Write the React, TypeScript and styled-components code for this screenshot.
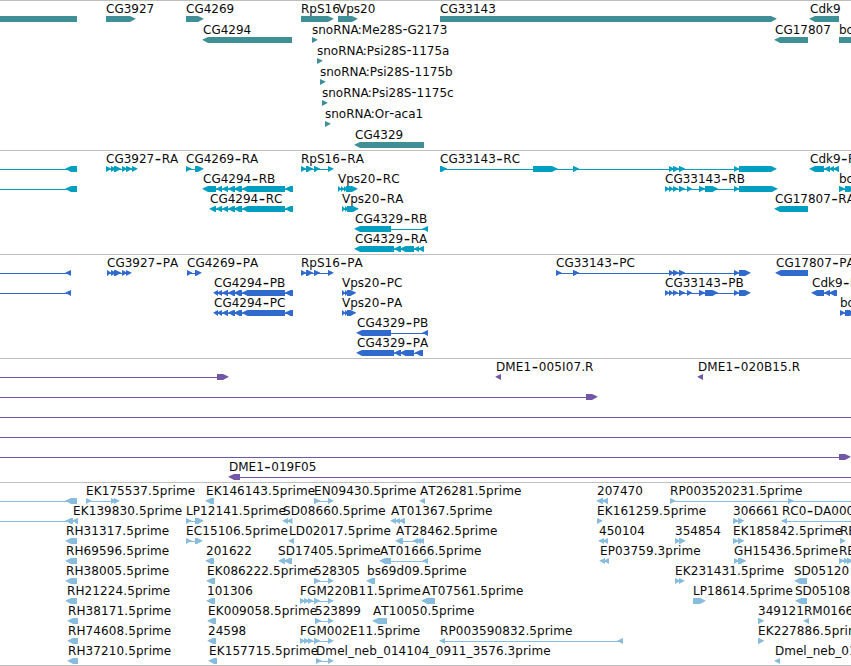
import React from 'react';
import styled, { createGlobalStyle } from 'styled-components';

const VIEW_WIDTH = 851;

const GlobalStyle = createGlobalStyle`
  body {
    margin: 0;
    background: #fff;
  }
`;

const Browser = styled.main`
  display: flex;
  flex-direction: column;
  width: ${VIEW_WIDTH}px;
  height: 666px;
  overflow: hidden;
  border-bottom: 1px solid #bebebe;
  box-sizing: border-box;
  background: #fff;
`;

const Track = styled.section<{ $color: string; $height: number }>`
  display: flex;
  flex-direction: column;
  flex: none;
  box-sizing: border-box;
  height: ${(p) => p.$height}px;
  border-top: 1px solid #bebebe;
  color: ${(p) => p.$color};
`;

const LaneCanvas = styled.svg`
  display: block;
  flex: none;
  margin-bottom: -1px;
  overflow: hidden;
`;

const Label = styled.text<{ $loose: boolean }>`
  font-family: 'DejaVu Sans', Verdana, sans-serif;
  font-size: 12px;
  font-kerning: none;
  letter-spacing: ${(p) => (p.$loose ? '0.1px' : 'normal')};
  fill: #0a0a0a;
  white-space: pre;
`;

const Hyphen = styled.tspan<{ $small: boolean }>`
  font-size: ${(p) => (p.$small ? 14 : 18)}px;
`;

type Dir = 'R' | 'L' | '-';
type Exon = [number, number];

interface Feature {
  name: string;
  at: number;
  dir: Dir;
  exons: Exon[];
  line?: Exon;
}

const f = (name: string, at: number, dir: Dir, exons: Exon[], line?: Exon): Feature => ({
  name,
  at,
  dir,
  exons,
  line,
});

interface TrackData {
  id: string;
  color: string;
  height: number;
  laneHeight: number;
  lanes: Feature[][];
}

const cg4294Tail: Exon[] = [[222, 228], [228, 235], [234, 242], [242, 285], [285, 293]];
const rps16: Exon[] = [[301, 306], [306, 313], [314, 320], [328, 333.5]];
const cg33143Mid: Exon[] = [[669, 674], [673, 679], [679, 685], [734, 739]];
const cg33143Short: Exon[] = [
  [665, 669], [669, 673], [673, 678], [679, 685], [687, 692], [699, 705], [705, 718], [734, 739],
];
const spliced: Exon[] = [[314, 320], [328, 333.5]];
const fgm: Exon[] = [[300, 305], [304, 309], [308, 313], [314, 320], [328, 333.5]];

const TRACKS: TrackData[] = [
  {
    id: 'genes',
    color: '#3f8f96',
    height: 150,
    laneHeight: 21,
    lanes: [
      [
        f('', 0, '-', [[0, 77]]),
        f('CG3927', 106, 'R', [[106, 135.5]]),
        f('CG4269', 186, 'R', [[186, 203.5]]),
        f('RpS16', 301, 'R', [[301, 333.5]]),
        f('Vps20', 338, 'R', [[338, 357.5]]),
        f('CG33143', 440, 'R', [[440, 776.5]]),
        f('Cdk9', 810, 'L', [[809.5, 839]]),
      ],
      [
        f('CG4294', 203, 'L', [[202.5, 292]]),
        f('snoRNA:Me28S-G2173', 312, 'R', [[312, 317.5]]),
        f('CG17807', 775, 'L', [[774.5, 808]]),
        f('bo', 839, '-', [[839, 851]]),
      ],
      [f('snoRNA:Psi28S-1175a', 317, 'R', [[317, 322.5]])],
      [f('snoRNA:Psi28S-1175b', 320, 'R', [[320, 325.5]])],
      [f('snoRNA:Psi28S-1175c', 322, 'R', [[322, 327.5]])],
      [f('snoRNA:Or-aca1', 325, 'R', [[325, 330.5]])],
      [f('CG4329', 355, 'L', [[354.5, 424]])],
    ],
  },
  {
    id: 'transcripts',
    color: '#009fc0',
    height: 104,
    laneHeight: 20,
    lanes: [
      [
        f('', 0, 'L', [[65.5, 77]], [0, 67]),
        f('CG3927-RA', 106, 'R', [[106, 111], [111, 116], [114, 121], [122, 127], [126, 132], [132, 137.5]]),
        f('CG4269-RA', 186, 'R', [[186, 191.5], [195, 203.5]]),
        f('RpS16-RA', 301, 'R', rps16),
        f('CG33143-RC', 440, 'R', [[440, 447], [533, 557.5], [573, 579], ...cg33143Mid, [739, 776.5]]),
        f('Cdk9-RA', 810, 'L', [[809.5, 824], [824, 830], [829, 834], [833, 839]]),
      ],
      [
        f('', 0, 'L', [[65.5, 77]], [0, 67]),
        f('CG4294-RB', 203, 'L', [[202.5, 216], [216, 222], ...cg4294Tail]),
        f('Vps20-RC', 338, 'R', [[338, 341], [341, 344], [344, 347], [346, 357.5]]),
        f('CG33143-RB', 665, 'R', [...cg33143Short, [739, 777.5]]),
        f('bo', 839, 'R', [[839, 845], [845, 855]]),
      ],
      [
        f('CG4294-RC', 210, 'L', [[209.5, 216], [216, 222], ...cg4294Tail]),
        f('Vps20-RA', 342, 'R', [[342, 345], [345, 348], [347, 358.5]]),
        f('CG17807-RA', 775, 'L', [[774.5, 808]]),
      ],
      [f('CG4329-RB', 355, 'L', [[354.5, 391], [422.5, 428]])],
      [f('CG4329-RA', 355, 'L', [[354.5, 394], [394, 401], [400, 414], [414, 419], [418, 424]])],
    ],
  },
  {
    id: 'proteins',
    color: '#306acd',
    height: 104,
    laneHeight: 20,
    lanes: [
      [
        f('', 0, 'L', [[65.5, 71]], [0, 67]),
        f('CG3927-PA', 107, 'R', [[107, 111], [111, 116], [114, 121], [122, 127], [126, 131.5]]),
        f('CG4269-PA', 187, 'R', [[187, 192], [195, 201.5]]),
        f('RpS16-PA', 301, 'R', rps16),
        f('CG33143-PC', 556, 'R', [[556, 561.5], [573, 579], ...cg33143Mid, [739, 750.5]]),
        f('CG17807-PA', 776, 'L', [[775.5, 808]]),
      ],
      [
        f('', 0, 'L', [[65.5, 71]], [0, 67]),
        f('CG4294-PB', 214, 'L', [[213.5, 218], [217, 222], ...cg4294Tail]),
        f('Vps20-PC', 342, 'R', [[342, 345], [345, 348], [347, 356]]),
        f('CG33143-PB', 665, 'R', [...cg33143Short, [739, 750.5]]),
        f('Cdk9-PA', 812, 'L', [[811.5, 824], [824, 830], [829, 837]]),
      ],
      [
        f('CG4294-PC', 214, 'L', [[213.5, 218], [217, 222], ...cg4294Tail]),
        f('Vps20-PA', 342, 'R', [[342, 345], [345, 348], [347, 356]]),
        f('bo', 840, 'R', [[840, 845], [845, 855]]),
      ],
      [f('CG4329-PB', 357, 'L', [[356.5, 391], [422.5, 428]])],
      [f('CG4329-PA', 357, 'L', [[356.5, 394], [394, 401], [400, 414], [415, 423]])],
    ],
  },
  {
    id: 'bac-ends',
    color: '#7357a6',
    height: 124,
    laneHeight: 20,
    lanes: [
      [
        f('', 0, 'R', [[217, 228.5]], [0, 218]),
        f('DME1-005I07.R', 496, 'L', [[495.5, 501]]),
        f('DME1-020B15.R', 698, 'L', [[697.5, 703]]),
      ],
      [f('', 0, 'R', [[586, 597.5]], [0, 587])],
      [f('', 0, '-', [], [0, 851])],
      [f('', 0, '-', [], [0, 851])],
      [f('', 0, 'R', [[839, 850.5]], [0, 840])],
      [f('DME1-019F05', 229, 'L', [[228.5, 240]], [239, 851])],
    ],
  },
  {
    id: 'ests',
    color: '#88bcdd',
    height: 183,
    laneHeight: 20,
    lanes: [
      [
        f('', 0, 'L', [[65.5, 77]], [0, 67]),
        f('EK175537.5prime', 86, 'R', [[86, 91.5], [111, 116], [114, 119.5]]),
        f('EK146143.5prime', 206, 'L', [[205.5, 214]]),
        f('EN09430.5prime', 314, 'R', spliced),
        f('AT26281.5prime', 420, 'L', [[419.5, 425]]),
        f('207470', 597, 'L', [[596.5, 603], [602, 608]]),
        f('RP003520231.5prime', 670, 'R', [[670, 675.5], [788, 793.5]], [670, 851]),
      ],
      [
        f('', 0, 'L', [[65.5, 73], [72, 78]], [0, 67]),
        f('EK139830.5prime', 73, '-', []),
        f('LP12141.5prime', 186, 'R', [[186, 191.5], [195, 203.5]]),
        f('SD08660.5prime', 283, 'L', [[282.5, 288], [287, 292.5]]),
        f('AT01367.5prime', 391, 'L', [[390.5, 396], [395, 400], [399, 405]]),
        f('EK161259.5prime', 597, 'R', [[597, 602.5]]),
        f('306661', 733, 'R', [[733, 738.5], [738, 744]]),
        f('RC0-DA000', 782, 'L', [[781.5, 787]], [782, 851]),
      ],
      [
        f('RH31317.5prime', 66, 'L', [[65.5, 77]]),
        f('EC15106.5prime', 186, 'R', [[186, 191.5], [195, 202.5]]),
        f('LD02017.5prime', 289, 'L', [[288.5, 294]]),
        f('AT28462.5prime', 396, 'L', [[395.5, 403], [413, 418], [416, 421], [419, 424]]),
        f('450104', 599, 'L', [[598.5, 604], [603, 608]]),
        f('354854', 675, 'R', [[675, 680], [679, 685.5]]),
        f('EK185842.5prime', 733, 'R', [[733, 738.5], [738, 744]]),
        f('RE', 840, 'R', [[840, 845.5]]),
      ],
      [
        f('RH69596.5prime', 66, 'L', [[65.5, 77]]),
        f('201622', 206, 'L', [[205.5, 214]]),
        f('SD17405.5prime', 278, 'L', [[278.5, 285], [284, 292]]),
        f('AT01666.5prime', 380, 'L', [[379.5, 391], [422.5, 428]]),
        f('EP03759.3prime', 600, 'L', [[599.5, 605], [604, 609]]),
        f('GH15436.5prime', 734, 'R', [[734, 739], [738, 746]]),
        f('RE', 839, 'R', [[839, 844.5], [844, 849], [847, 853]]),
      ],
      [
        f('RH38005.5prime', 66, 'L', [[65.5, 77]]),
        f('EK086222.5prime', 207, 'L', [[206.5, 215]]),
        f('528305', 314, 'R', spliced),
        f('bs69d09.5prime', 367, 'L', [[366.5, 375]]),
        f('EK231431.5prime', 675, 'R', [[675, 680], [679, 684.5]]),
        f('SD05120', 794, 'L', [[794.5, 807]]),
      ],
      [
        f('RH21224.5prime', 67, 'L', [[65.5, 77]]),
        f('101306', 207, 'L', [[206.5, 215]]),
        f('FGM220B11.5prime', 300, 'R', fgm),
        f('AT07561.5prime', 422, 'L', [[421.5, 435]]),
        f('LP18614.5prime', 693, 'R', [[693, 705.5]]),
        f('SD05108', 795, 'L', [[795.5, 807]]),
      ],
      [
        f('RH38171.5prime', 68, 'L', [[67.5, 78]]),
        f('EK009058.5prime', 208, 'L', [[207.5, 216]]),
        f('523899', 315, 'R', [[315, 321], [328, 333.5]]),
        f('AT10050.5prime', 373, 'L', [[372.5, 387]]),
        f('349121', 758, 'R', [[758, 764]]),
        f('RM01666', 804, 'L', [[803.5, 809]]),
      ],
      [
        f('RH74608.5prime', 68, 'L', [[67.5, 78]]),
        f('24598', 208, 'L', [[207.5, 216]]),
        f('FGM002E11.5prime', 300, 'R', fgm),
        f('RP003590832.5prime', 440, 'L', [[439.5, 445], [617.5, 623]]),
        f('EK227886.5prime', 758, 'R', [[758, 764]]),
      ],
      [
        f('RH37210.5prime', 68, 'L', [[67.5, 78]]),
        f('EK157715.5prime', 209, 'L', [[208.5, 217]]),
        f('Dmel_neb_014104_0911_3576.3prime', 316, 'R', [[316, 321.5], [328, 333.5]]),
        f('Dmel_neb_01', 775, 'L', [[774.5, 780]]),
      ],
    ],
  },
];

const TOP = 15;
const TIP = 17.4;
const BOTTOM = 21;

/* Outline of one exon block, ending in an arrow head on its 3' side. */
function exonPath([a, b]: Exon, dir: Dir): string {
  const head = Math.min(5.5, b - a);
  if (dir === 'R') {
    const n = b - head;
    return `M${a} ${TOP}H${n}L${b} ${TIP}V${TIP + 0.6}L${n} ${BOTTOM}H${a}Z`;
  }
  if (dir === 'L') {
    const n = a + head;
    return `M${b} ${TOP}H${n}L${a} ${TIP}V${TIP + 0.6}L${n} ${BOTTOM}H${b}Z`;
  }
  return `M${a} ${TOP}H${b}V${BOTTOM}H${a}Z`;
}

function intronOf(feature: Feature): Exon | null {
  if (feature.line) return feature.line;
  if (feature.exons.length < 2) return null;
  const last = feature.exons[feature.exons.length - 1];
  return [feature.exons[0][0] + 2, last[1] - 2];
}

/* A feature name; its hyphen is drawn wide and level with mid-cap height. */
function FeatureLabel({ name, at }: { name: string; at: number }) {
  const [head, tail] = name.split('-');
  const long = name.startsWith('sno');
  const [prefix, rest] = head.split(':');
  return (
    <Label x={at} y={12} $loose={name.includes('.')}>
      {prefix}
      {rest !== undefined && <tspan dx={-1}>:</tspan>}
      {rest}
      {tail !== undefined && (
        <>
          <Hyphen $small={long} dx={long ? 0 : 0.5} dy={long ? 0.2 : 1}>
            -
          </Hyphen>
          <tspan dx={long ? 0 : 0.5} dy={long ? -0.2 : -1}>
            {tail}
          </tspan>
        </>
      )}
    </Label>
  );
}

function Lane({ features, height }: { features: Feature[]; height: number }) {
  return (
    <LaneCanvas width={VIEW_WIDTH} height={height + 1}>
      {features.map((feature, i) => {
        const intron = intronOf(feature);
        return (
          <g key={i}>
            {intron && (
              <rect x={intron[0]} y={18} width={intron[1] - intron[0]} height={1} fill="currentColor" />
            )}
            {feature.exons.map((exon, j) => (
              <path key={j} d={exonPath(exon, feature.dir)} fill="currentColor" />
            ))}
            {feature.name && <FeatureLabel name={feature.name} at={feature.at} />}
          </g>
        );
      })}
    </LaneCanvas>
  );
}

export default function App() {
  return (
    <>
      <GlobalStyle />
      <Browser>
        {TRACKS.map((track) => (
          <Track key={track.id} $color={track.color} $height={track.height}>
            {track.lanes.map((lane, i) => (
              <Lane key={i} features={lane} height={track.laneHeight} />
            ))}
          </Track>
        ))}
      </Browser>
    </>
  );
}
